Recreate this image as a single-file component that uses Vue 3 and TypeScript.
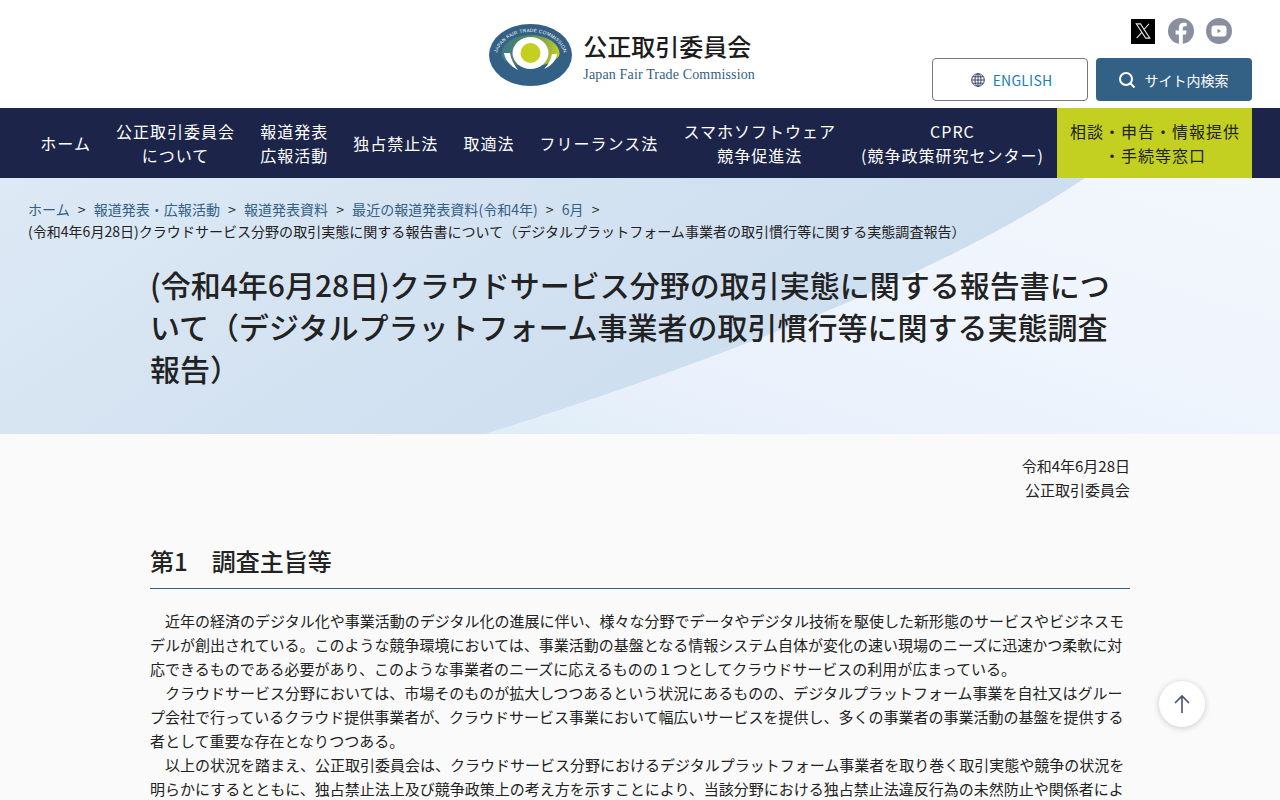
<script setup lang="ts">
interface NavItem {
  lines: string[]
}

const navItems: NavItem[] = [
  { lines: ['ホーム'] },
  { lines: ['公正取引委員会', 'について'] },
  { lines: ['報道発表', '広報活動'] },
  { lines: ['独占禁止法'] },
  { lines: ['取適法'] },
  { lines: ['フリーランス法'] },
  { lines: ['スマホソフトウェア', '競争促進法'] },
  { lines: ['CPRC', '(競争政策研究センター)'] }
]

const crumbs = ['ホーム', '報道発表・広報活動', '報道発表資料', '最近の報道発表資料(令和4年)', '6月']

const paragraphs = [
  '近年の経済のデジタル化や事業活動のデジタル化の進展に伴い、様々な分野でデータやデジタル技術を駆使した新形態のサービスやビジネスモデルが創出されている。このような競争環境においては、事業活動の基盤となる情報システム自体が変化の速い現場のニーズに迅速かつ柔軟に対応できるものである必要があり、このような事業者のニーズに応えるものの１つとしてクラウドサービスの利用が広まっている。',
  'クラウドサービス分野においては、市場そのものが拡大しつつあるという状況にあるものの、デジタルプラットフォーム事業を自社又はグループ会社で行っているクラウド提供事業者が、クラウドサービス事業において幅広いサービスを提供し、多くの事業者の事業活動の基盤を提供する者として重要な存在となりつつある。',
  '以上の状況を踏まえ、公正取引委員会は、クラウドサービス分野におけるデジタルプラットフォーム事業者を取り巻く取引実態や競争の状況を明らかにするとともに、独占禁止法上及び競争政策上の考え方を示すことにより、当該分野における独占禁止法違反行為の未然防止や関係者によ'
]
</script>

<template>
  <div class="page">
    <header class="site-header">
      <a class="logo" href="#">
        <svg class="logo-mark" width="84" height="62" viewBox="0 0 84 62">
          <defs>
            <linearGradient id="swirl" x1="0" y1="0.4" x2="1" y2="0.5">
              <stop offset="0" stop-color="#3f7a86" />
              <stop offset="0.45" stop-color="#4f8560" />
              <stop offset="0.8" stop-color="#9db53c" />
              <stop offset="1" stop-color="#c3d021" />
            </linearGradient>
            <path id="ring-top" d="M7.500 34 A34 26 0 0 1 75.500 34" />
          </defs>
          <ellipse cx="41.500" cy="31" rx="41.500" ry="31" fill="#336085" />
          <text class="logo-ring-text">
            <textPath href="#ring-top" startOffset="50%" text-anchor="middle">JAPAN FAIR TRADE COMMISSION</textPath>
          </text>
          <ellipse cx="41.500" cy="29.500" rx="29" ry="18.500" fill="url(#swirl)" />
          <path d="M12 33 C20 45 60 47 71 31 L72 50 H12 Z" fill="#336085" />
          <path d="M15 29 C16 37 23 43 29 46 C25 41 22 35 21 29 Z" fill="#fff" />
          <path d="M68 30 C67 37 62 42 55 45 C60 40 62 35 63 30 Z" fill="#fff" />
          <ellipse cx="41.500" cy="29" rx="18" ry="16" fill="#fff" />
          <circle cx="41.500" cy="29" r="10" fill="#c3d021" />
        </svg>
        <span class="logo-text">
          <span class="logo-ja">公正取引委員会</span>
          <span class="logo-en">Japan Fair Trade Commission</span>
        </span>
      </a>
      <div class="header-tools">
        <div class="social">
          <a class="x-icon" href="#" aria-label="X">
            <svg width="18" height="18" viewBox="0 0 24 24">
              <path d="M3 2.500h5.600l12.600 19h-5.600z M20 2.500l-7.200 8.200 M11 13.200l-7.400 8.300" fill="none" stroke="#e8e8e8" stroke-width="1.400" />
            </svg>
          </a>
          <a href="#" aria-label="Facebook">
            <svg width="26" height="26" viewBox="0 0 26 26">
              <circle cx="13" cy="13" r="13" fill="#8a8f9f" />
              <path d="M14.800 26V16.400h3.200l.6-3.800h-3.800v-2.300c0-1.100.5-2 2.100-2h1.800V5c-.9-.1-1.900-.3-3-.3-3 0-4.800 1.800-4.800 5v2.900H7.600v3.800h3.300V26z" fill="#fff" />
            </svg>
          </a>
          <a href="#" aria-label="YouTube">
            <svg width="26" height="26" viewBox="0 0 26 26">
              <circle cx="13" cy="13" r="13" fill="#8a8f9f" />
              <rect x="5.500" y="7.500" width="15" height="11" rx="3" fill="#fff" />
              <path d="M11.500 10.800v4.400l3.600-2.200z" fill="#8a8f9f" />
            </svg>
          </a>
        </div>
        <div class="tool-buttons">
          <a class="btn-english" href="#">
            <svg width="14" height="14" viewBox="0 0 14 14" fill="none" stroke="#3c4566" stroke-width="1">
              <circle cx="7" cy="7" r="6.300" />
              <ellipse cx="7" cy="7" rx="3" ry="6.300" />
              <path d="M7 .7v12.600M.7 7h12.600M1.600 3.800h10.800M1.600 10.200h10.800" />
            </svg>
            ENGLISH
          </a>
          <a class="btn-search" href="#">
            <svg width="18" height="18" viewBox="0 0 18 18" fill="none" stroke="#fff" stroke-width="2">
              <circle cx="8" cy="8" r="6" />
              <path d="M12.500 12.500l4 4" />
            </svg>
            サイト内検索
          </a>
        </div>
      </div>
    </header>

    <nav class="global-nav">
      <a v-for="item in navItems" :key="item.lines[0]" class="nav-item" href="#">
        <span v-for="line in item.lines" :key="line">{{ line }}</span>
      </a>
      <a class="nav-item nav-contact" href="#">
        <span>相談・申告・情報提供</span>
        <span>・手続等窓口</span>
      </a>
    </nav>

    <section class="hero">
      <svg class="hero-bg" width="1280" height="256" viewBox="0 0 1280 256" preserveAspectRatio="none">
        <defs>
          <linearGradient id="hero-left" x1="0" y1="0" x2="1" y2="0.3">
            <stop offset="0" stop-color="#dde9f5" />
            <stop offset="0.45" stop-color="#d3e2f1" />
            <stop offset="1" stop-color="#c8dbee" />
          </linearGradient>
          <linearGradient id="hero-right" x1="0" y1="1" x2="1" y2="0">
            <stop offset="0" stop-color="#dfedf6" />
            <stop offset="0.18" stop-color="#e8f0fb" />
            <stop offset="0.6" stop-color="#f0f5fd" />
            <stop offset="1" stop-color="#f1f7fb" />
          </linearGradient>
        </defs>
        <rect width="1280" height="256" fill="url(#hero-left)" />
        <path d="M1085 0 Q900 125 485 256 H1280 V0 Z" fill="url(#hero-right)" />
      </svg>
      <ol class="breadcrumb">
        <li v-for="crumb in crumbs" :key="crumb"><a href="#">{{ crumb }}</a><span class="sep">&gt;</span></li>
        <li class="current">(令和4年6月28日)クラウドサービス分野の取引実態に関する報告書について（デジタルプラットフォーム事業者の取引慣行等に関する実態調査報告）</li>
      </ol>
      <h1 class="page-title">(令和4年6月28日)クラウドサービス分野の取引実態に関する報告書について（デジタルプラットフォーム事業者の取引慣行等に関する実態調査報告）</h1>
    </section>

    <main class="content">
      <div class="issuer">
        <p>令和4年6月28日</p>
        <p>公正取引委員会</p>
      </div>
      <h2 class="section-title">第1　調査主旨等</h2>
      <p v-for="(text, i) in paragraphs" :key="i" class="body-text">{{ text }}</p>
    </main>

    <a class="to-top" href="#" aria-label="ページトップへ">
      <svg width="18" height="20" viewBox="0 0 18 20" fill="none" stroke="#4a5273" stroke-width="1.600">
        <path d="M9 19V2M2 9l7-7 7 7" />
      </svg>
    </a>
  </div>
</template>

<style scoped>
.page {
  height: 800px;
  overflow: hidden;
  background: #fafafa;
  color: #222;
  font-family: "Noto Sans CJK JP", "Noto Sans", sans-serif;
}

a {
  color: inherit;
  text-decoration: none;
}

/* Header */
.site-header {
  height: 108px;
  background: #fff;
  display: grid;
  grid-template-columns: 1fr auto;
  padding-right: 28px;
}

.logo {
  justify-self: end;
  margin-right: 177px;
  display: flex;
  align-items: center;
  gap: 10px;
  margin-top: 1px;
}

.logo-ring-text {
  font-family: "Liberation Sans", sans-serif;
  font-size: 4.800px;
  fill: #fff;
  letter-spacing: 0.25px;
}

.logo-text {
  display: flex;
  flex-direction: column;
  gap: 2px;
  padding-top: 4px;
}

.logo-ja {
  font-size: 24px;
  font-weight: 500;
  line-height: 34px;
  color: #1c1c1c;
}

.logo-en {
  font-family: "Liberation Serif", serif;
  font-size: 14px;
  line-height: 20px;
  letter-spacing: 0.15px;
  color: #336085;
}

.header-tools {
  width: 320px;
  display: flex;
  flex-direction: column;
  gap: 14px;
  padding-top: 18px;
}

.social {
  display: flex;
  justify-content: flex-end;
  align-items: center;
  gap: 12px;
  height: 26px;
  padding-right: 20px;
}

.social a {
  display: flex;
}

.social .x-icon {
  width: 24px;
  height: 25px;
  margin-right: 1px;
  background: #000;
  align-items: center;
  justify-content: center;
}

.tool-buttons {
  display: flex;
  gap: 8px;
}

.btn-english,
.btn-search {
  width: 156px;
  height: 43px;
  border-radius: 4px;
  display: flex;
  align-items: center;
  justify-content: center;
  box-sizing: border-box;
}

.btn-english {
  border: 1px solid #777;
  gap: 8px;
  padding-left: 3px;
  color: #1a7fb8;
  font-size: 14px;
  letter-spacing: 0.2px;
  background: #fff;
}

.btn-search {
  background: #336085;
  color: #fff;
  font-size: 14px;
  gap: 9px;
  padding-right: 2px;
}

/* Global navigation */
.global-nav {
  height: 70px;
  background: #1c2549;
  display: flex;
  padding: 0 28px 0 27.800px;
}

.nav-item {
  display: flex;
  flex-direction: column;
  align-items: center;
  justify-content: center;
  padding: 0 12.570px;
  color: #fff;
  font-size: 16px;
  line-height: 24px;
  letter-spacing: 1px;
  white-space: nowrap;
}

.nav-contact {
  flex: 0 0 195px;
  margin-left: auto;
  box-sizing: border-box;
  background: #c3d021;
  color: #222;
  padding: 0 0 0 1px;
}

/* Hero */
.hero {
  position: relative;
  height: 256px;
  overflow: hidden;
  box-sizing: border-box;
  padding: 20px 28px 0;
}

.hero-bg {
  position: absolute;
  inset: 0;
}

.breadcrumb {
  position: relative;
  margin: 0;
  padding: 0;
  list-style: none;
  display: flex;
  flex-wrap: wrap;
  font-size: 14.040px;
  line-height: 22px;
  color: #336085;
}

.sep {
  margin: 0 8.100px;
  color: #222;
}

.current {
  width: 100%;
  color: #222;
}

.page-title {
  position: relative;
  margin: 21px 122px 0;
  font-size: 30px;
  line-height: 42px;
  font-weight: 500;
  color: #222;
}

/* Main content */
.content {
  width: 980px;
  margin: 0 auto;
  padding-top: 20px;
}

.issuer {
  text-align: right;
  font-size: 15px;
  line-height: 24px;
  margin-bottom: 40px;
}

.issuer p {
  margin: 0;
}

.section-title {
  margin: 0 0 20px;
  padding-bottom: 8px;
  font-size: 24px;
  line-height: 38px;
  font-weight: 500;
  border-bottom: 1px solid #336085;
}

.body-text {
  margin: 0;
  font-size: 15px;
  line-height: 24px;
  text-indent: 1em;
}

.to-top {
  position: fixed;
  left: 1159px;
  top: 681px;
  width: 46px;
  height: 46px;
  border-radius: 50%;
  background: #fff;
  box-shadow: 0 1px 6px rgba(0, 0, 0, 0.2);
  display: flex;
  align-items: center;
  justify-content: center;
}
</style>
